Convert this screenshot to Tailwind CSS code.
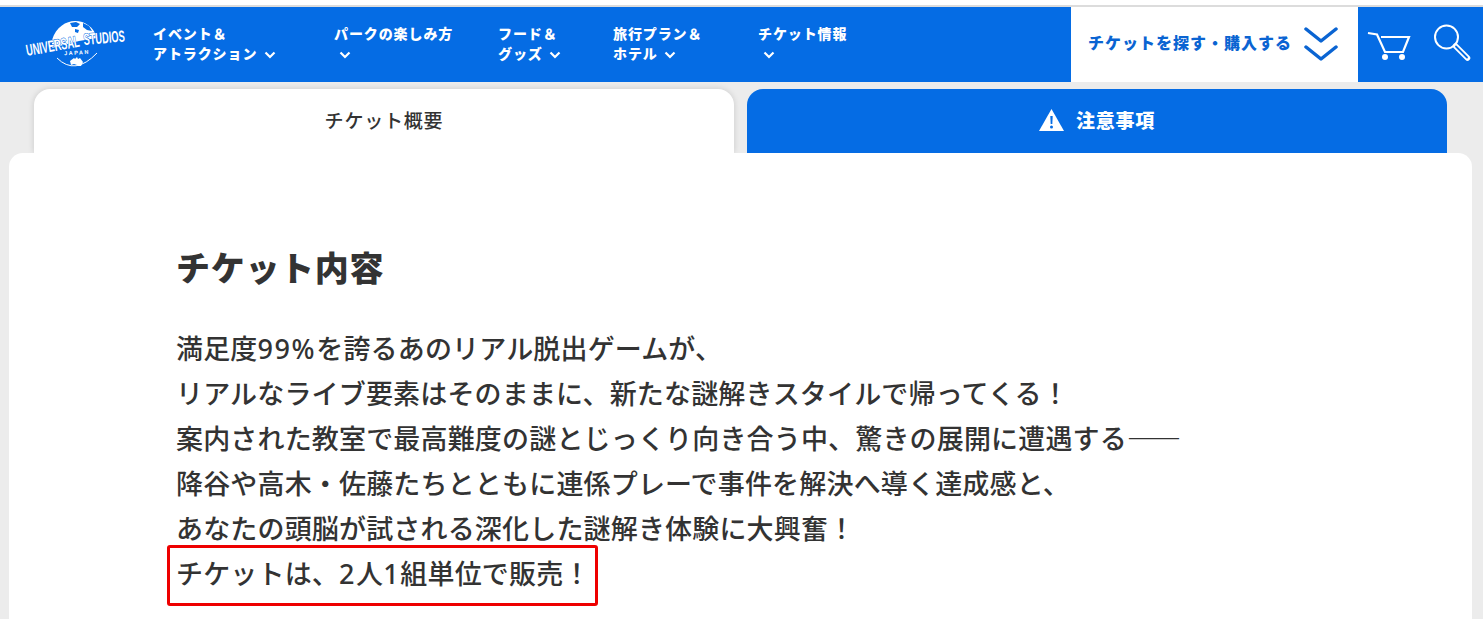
<!DOCTYPE html>
<html lang="ja">
<head>
  <meta charset="UTF-8" />
  <meta name="viewport" content="width=device-width, initial-scale=1.0"/>
  <title>チケット内容</title>
  <script src="https://cdn.jsdelivr.net/npm/@tailwindcss/browser@4"></script>
</head>
<body class="bg-[#ececec] h-[619px] overflow-hidden font-['Noto_Sans','Noto_Sans_CJK_JP',sans-serif] text-[#333]">

  <!-- top strip -->
  <div class="h-[5px] bg-white"></div>
  <div class="h-[2px] bg-[#dcdcdc]"></div>

  <!-- Header -->
  <header class="h-[75px] bg-[#056ce4] flex items-stretch text-white">
    <a class="w-[153px] shrink-0 pl-[25px] pt-[12px]">
      <svg width="102" height="52" viewBox="0 0 102 52">
        <path d="M27 21 C31 8 41 2 50 2 C60 2 69 8 72 19 L54 22 L27 29Z" fill="#fff"/>
        <path d="M45 4l6-1 4 2-3 3-5 0zM58 4l6 3 3 5-5-1-4-3zM50 10l4 1-1 3-3-1z" fill="#056ce4"/>
        <g font-family="'Liberation Sans',sans-serif" font-size="16" font-weight="700" fill="#fff" stroke="#056ce4" stroke-width="1.200" paint-order="stroke">
          <text transform="translate(2 37) rotate(-10) scale(.585 1)">UNIVERSAL</text>
          <text transform="translate(59 26) rotate(-5) scale(.58 1)">STUDIOS</text>
        </g>
        <text x="52" y="35.500" text-anchor="middle" font-family="'Liberation Sans',sans-serif" font-size="5.500" font-weight="700" letter-spacing="1.500" fill="#fff" transform="rotate(-3 52 35.500)">JAPAN</text>
        <path d="M32 39 Q50 57 72 34" fill="none" stroke="#fff" stroke-width="1"/>
        <path d="M45 42l4-3 1 1 2-2 1 2 2-1 3 4-2 4-3 0-1-1-3-1-3 1z" fill="#fff"/>
      </svg>
    </a>
    <nav class="flex text-[14px] font-black leading-[20px] tracking-[0.9px] pt-[17px]">
      <a class="w-[181px]">イベント＆<br>アトラクション
        <svg class="inline w-[12px] h-[8px] ml-[2px]" viewBox="0 0 12 8"><path d="M1.500 1.500 6 6l4.500-4.500" fill="none" stroke="#fff" stroke-width="2.200"/></svg></a>
      <a class="w-[164px]">パークの楽しみ方<br>
        <svg class="inline w-[12px] h-[8px] ml-[5px]" viewBox="0 0 12 8"><path d="M1.500 1.500 6 6l4.500-4.500" fill="none" stroke="#fff" stroke-width="2.200"/></svg></a>
      <a class="w-[115px]">フード＆<br>グッズ
        <svg class="inline w-[12px] h-[8px] ml-[2px]" viewBox="0 0 12 8"><path d="M1.500 1.500 6 6l4.500-4.500" fill="none" stroke="#fff" stroke-width="2.200"/></svg></a>
      <a class="w-[145px]">旅行プラン＆<br>ホテル
        <svg class="inline w-[12px] h-[8px] ml-[2px]" viewBox="0 0 12 8"><path d="M1.500 1.500 6 6l4.500-4.500" fill="none" stroke="#fff" stroke-width="2.200"/></svg></a>
      <a class="w-[313px]">チケット情報<br>
        <svg class="inline w-[12px] h-[8px] ml-[5px]" viewBox="0 0 12 8"><path d="M1.500 1.500 6 6l4.500-4.500" fill="none" stroke="#fff" stroke-width="2.200"/></svg></a>
    </nav>
    <a class="w-[287px] shrink-0 bg-white text-[#0a64d2] flex items-center pl-[17px] pb-[3px] gap-[12px] text-[16px] font-black tracking-[1px]">
      <span>チケットを探す・購入する</span>
      <svg class="mt-[3px]" width="34" height="36" viewBox="0 0 34 36"><path d="M2 2l15 12L32 2M2 20l15 12L32 20" fill="none" stroke="#0a64d2" stroke-width="3.500" stroke-linecap="round" stroke-linejoin="round"/></svg>
    </a>
    <div class="flex-1 flex items-center pl-[9px] gap-[23px]">
      <svg width="44" height="32" viewBox="0 0 44 32"><path d="M1 4l9 1.500L18 23h18l6-15H14" fill="none" stroke="#fff" stroke-width="2.200"/><circle cx="18" cy="28" r="3" fill="#fff"/><circle cx="35" cy="28" r="3" fill="#fff"/></svg>
      <svg class="-mt-[3px]" width="38" height="38" viewBox="0 0 38 38"><circle cx="12.500" cy="13" r="11.500" fill="none" stroke="#fff" stroke-width="2"/><path d="M21.500 22l12 12" stroke="#fff" stroke-width="5.500" stroke-linecap="round"/><path d="M22 22.500l11 11" stroke="#056ce4" stroke-width="1.800" stroke-linecap="round"/></svg>
    </div>
  </header>

  <!-- Tabs -->
  <div class="flex gap-[13px] pl-[34px] pt-[7px] h-[71px]">
    <div class="w-[700px] h-[64px] bg-white rounded-t-[16px] shadow-[0_0_6px_rgba(0,0,0,0.15)] flex items-center justify-center text-[19px] font-medium tracking-[0.800px] text-[#333] pt-[1px]">チケット概要</div>
    <div class="w-[700px] h-[64px] bg-[#056ce4] rounded-t-[16px] flex items-center justify-center gap-[12px] text-[19px] font-black tracking-[0.800px] text-white pt-[1px]">
      <svg class="-mt-[3px]" width="25" height="22" viewBox="0 0 25 22"><path d="M12.500 0 25 22H0z" fill="#fff"/><path d="M11.300 7h2.400l-.4 8h-1.600z" fill="#056ce4"/><circle cx="12.500" cy="18" r="1.500" fill="#056ce4"/></svg>
      <span>注意事項</span>
    </div>
  </div>

  <!-- Card -->
  <main class="relative ml-[9px] w-[1463px] h-[480px] bg-white rounded-t-[14px] pl-[167px] pt-[88px]">
    <h2 class="text-[34px] leading-[54px] font-black tracking-[0.700px] text-[#333]">チケット内容</h2>
    <p class="mt-[31px] text-[27px] leading-[45px] font-medium tracking-[0.170px] text-[#333]">
      満足度<span class="tracking-[1.600px]">99%</span>を誇るあのリアル脱出ゲームが、<br>
      リアルなライブ要素はそのままに、新たな謎解きスタイルで帰ってくる！<br>
      案内された教室で最高難度の謎とじっくり向き合う中、驚きの展開に遭遇する<span class="font-['Noto_Sans_CJK_JP'] font-normal leading-none tracking-[3px]">――</span><br>
      降谷や高木・佐藤たちとともに連係プレーで事件を解決へ導く達成感と、<br>
      あなたの頭脳が試される深化した謎解き体験に大興奮！<br>
      チケットは、<span class="tracking-[1.600px]">2</span>人<span class="tracking-[1.600px]">1</span>組単位で販売！
    </p>
    <div class="absolute left-[158px] top-[392px] w-[431px] h-[61px] border-[3px] border-[#ee0000] rounded-[3px]"></div>
  </main>
</body>
</html>
